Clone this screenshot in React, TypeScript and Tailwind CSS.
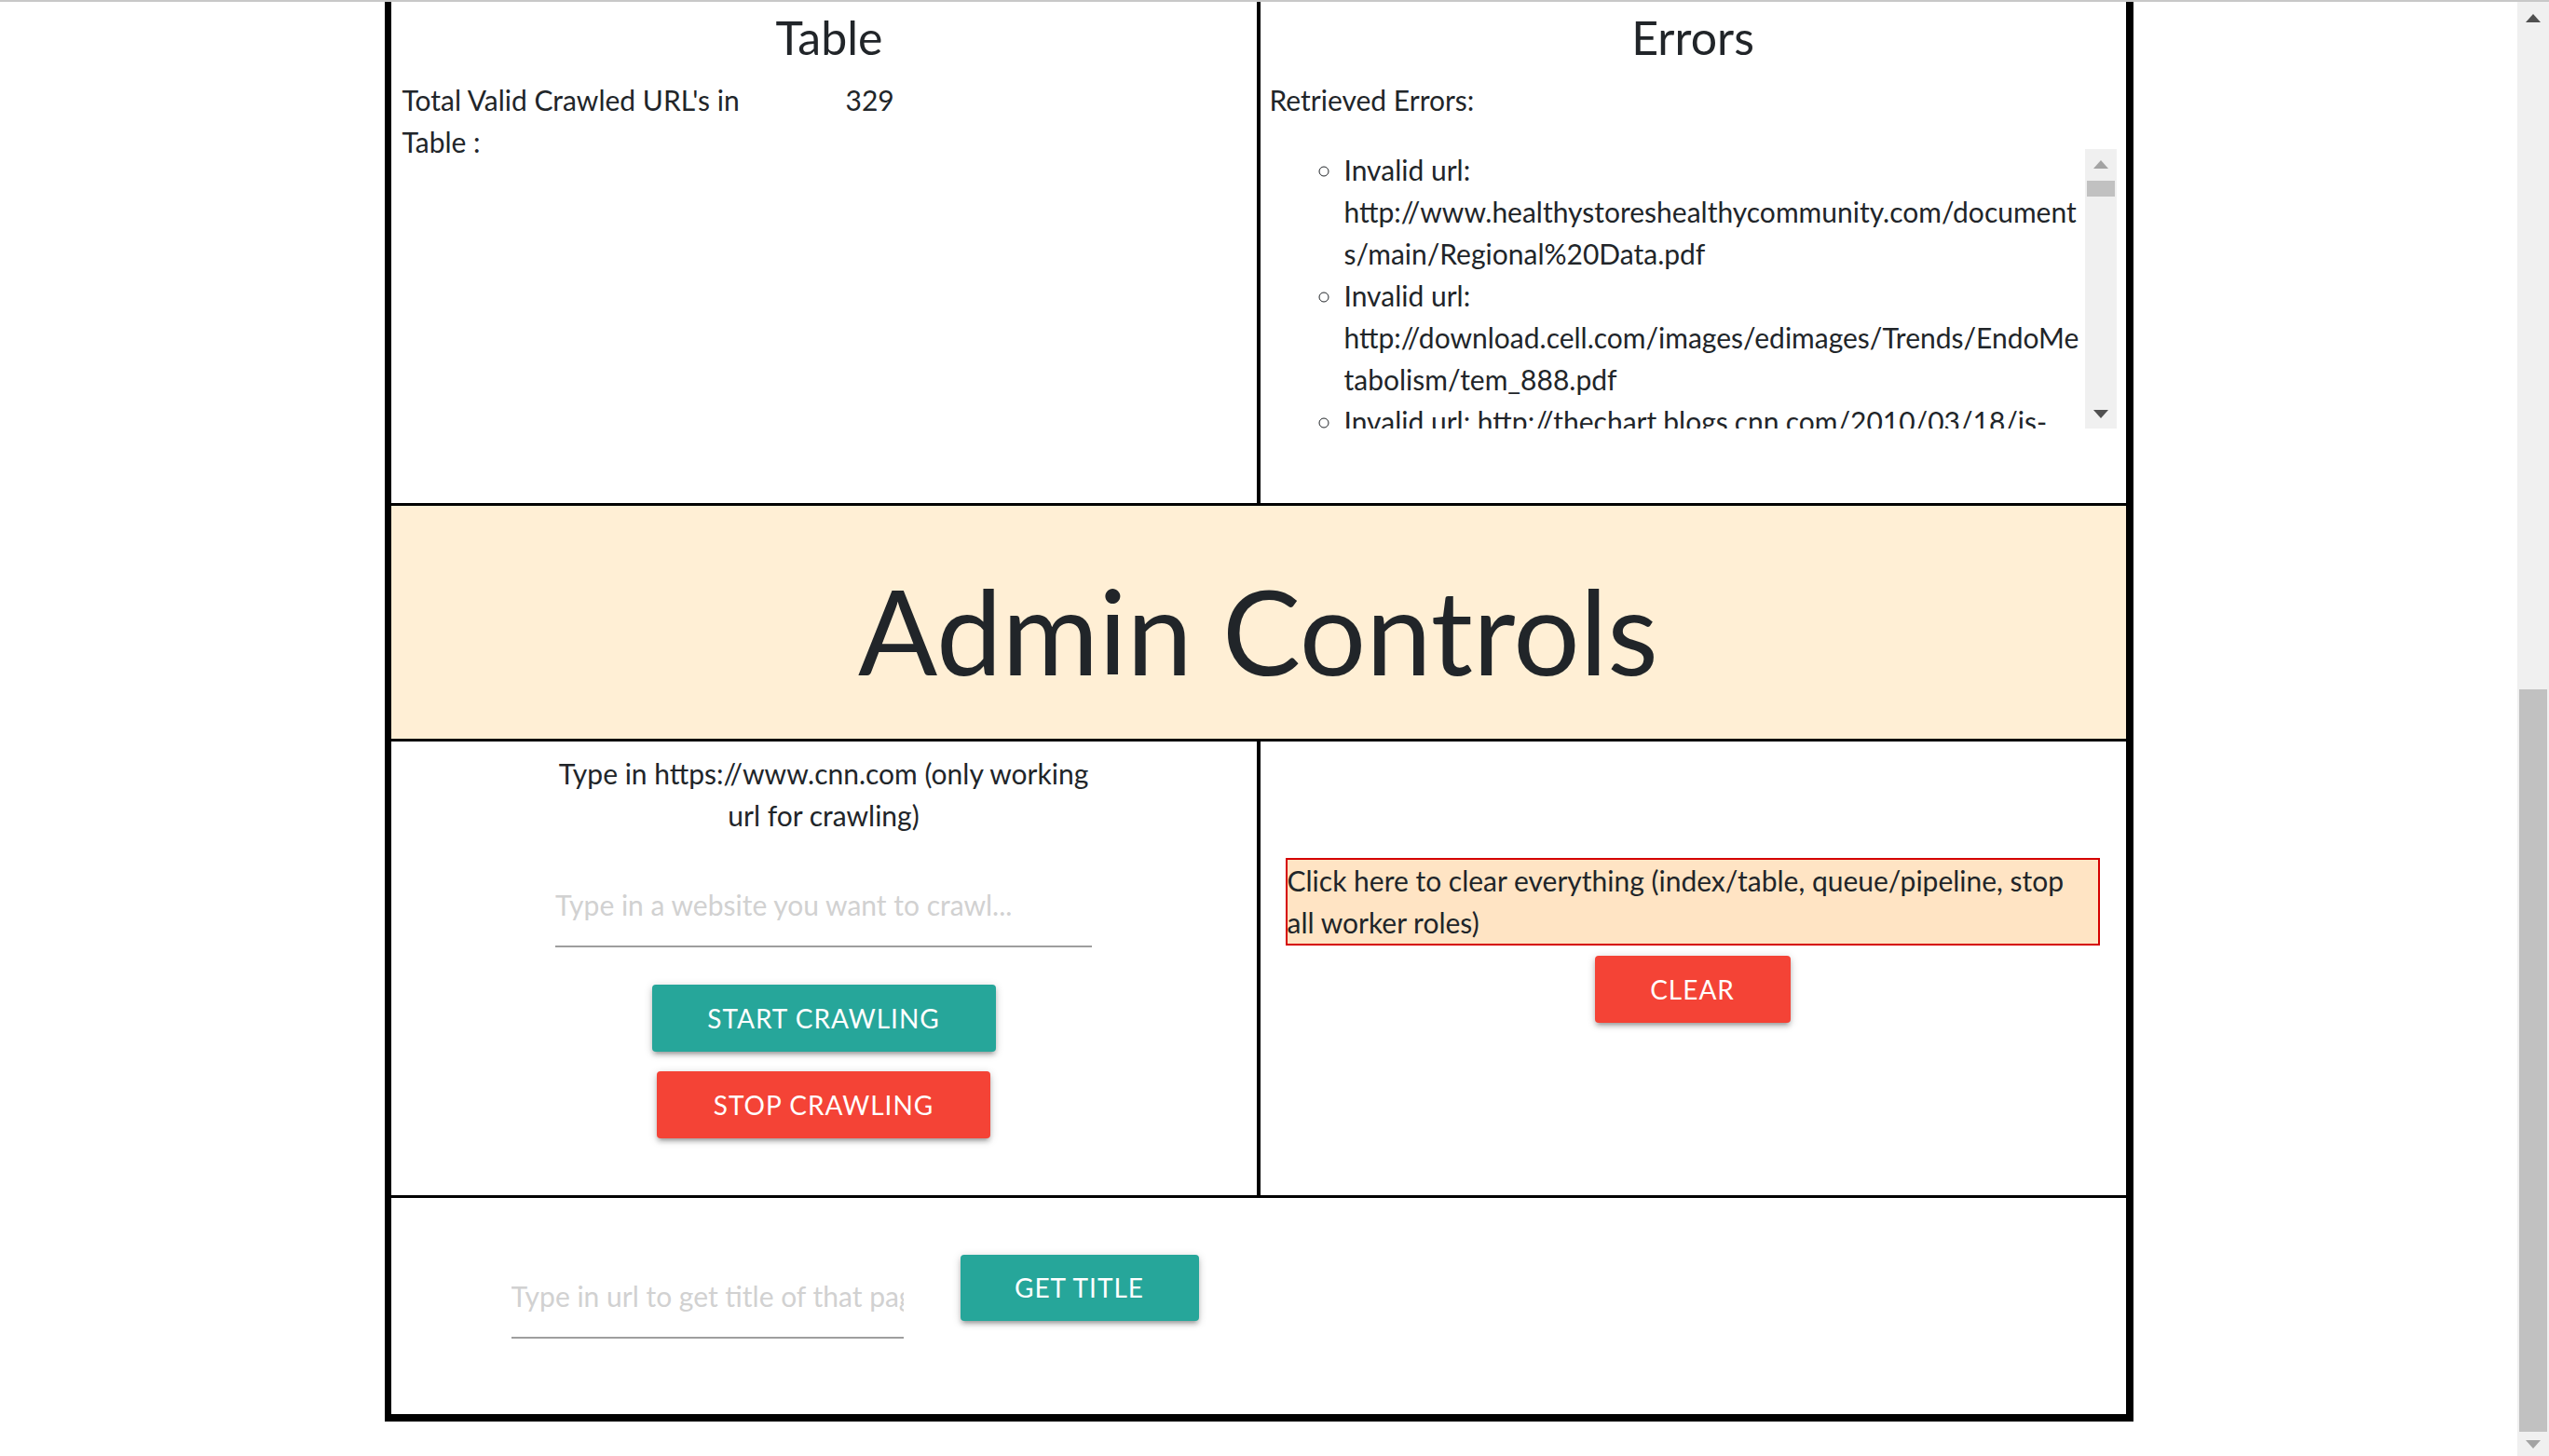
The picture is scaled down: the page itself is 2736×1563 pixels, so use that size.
const ERRORS = [
  'Invalid url: http://www.healthystoreshealthycommunity.com/documents/main/Regional%20Data.pdf',
  'Invalid url: http://download.cell.com/images/edimages/Trends/EndoMetabolism/tem_888.pdf',
  'Invalid url: http://thechart.blogs.cnn.com/2010/03/18/is-your-child-getting-enough-sleep/',
  'Invalid url: http://www.cnn.com/2016/03/04/politics/gop-debate-fact-check/index.html',
  'Invalid url: http://money.cnn.com/video/news/2016/02/10/markets-today.cnnmoney/',
]

function Arrow({ up, color }: { up?: boolean; color: string }) {
  return (
    <svg width="16" height="9" viewBox="0 0 16 9">
      <polygon points={up ? '0,9 8,0 16,9' : '0,0 16,0 8,9'} fill={color} />
    </svg>
  )
}

const buttonShadow =
  'shadow-[0_4px_4px_0_rgba(0,0,0,0.14),0_6px_2px_-4px_rgba(0,0,0,0.12),0_2px_10px_0_rgba(0,0,0,0.2)]'

export default function App() {
  return (
    <div className="flex h-[1563px] w-full overflow-hidden border-t-2 border-[#c8c8c8] bg-white font-['Lato',sans-serif] text-[30px] leading-[45px] text-[#212529]">
      <main className="min-w-0 flex-1 overflow-hidden">
        <div className="mx-auto w-[1877px] border-l-[7px] border-r-[8px] border-b-[8px] border-black">
          {/* Table / Errors */}
          <div className="flex h-[538px]">
            <section className="w-[933px] shrink-0 border-r-4 border-black pl-3">
              <h2 className="pt-[8px] text-center text-[50px] leading-[60px]">Table</h2>
              <div className="mt-[15px] flex">
                <div className="w-[476px] pr-[56px]">Total Valid Crawled URL's in Table :</div>
                <div>329</div>
              </div>
            </section>

            <section className="min-w-0 flex-1 px-[10px]">
              <h2 className="pt-[8px] text-center text-[50px] leading-[60px]">Errors</h2>
              <p className="mt-[15px]">Retrieved Errors:</p>
              <div className="mt-[30px] flex h-[300px]">
                <div className="min-w-0 flex-1 overflow-hidden">
                  <ul className="list-[circle] pl-[80px] [overflow-wrap:anywhere]">
                    {ERRORS.map(e => (
                      <li key={e}>{e}</li>
                    ))}
                  </ul>
                </div>
                <div className="flex w-[34px] shrink-0 flex-col bg-[#f0f0f0]">
                  <div className="flex h-[32px] items-center justify-center">
                    <Arrow up color="#a3a3a3" />
                  </div>
                  <div className="mx-[2px] mt-[2px] h-[17px] bg-[#c1c1c1]" />
                  <div className="flex-1" />
                  <div className="flex h-[32px] items-center justify-center">
                    <Arrow color="#505050" />
                  </div>
                </div>
              </div>
            </section>
          </div>

          {/* Header */}
          <div className="h-[256px] border-y-[3px] border-black bg-[#ffefd5]">
            <h1 className="pt-[59px] text-center text-[126px] leading-[150px]">Admin Controls</h1>
          </div>

          {/* Crawl controls / Clear */}
          <div className="flex h-[490px] border-b-[3px] border-black">
            <section className="w-[933px] shrink-0 border-r-4 border-black">
              <div className="mx-auto flex w-[576px] flex-col items-center pt-[12px]">
                <p className="text-center">Type in https://www.cnn.com (only working url for crawling)</p>
                <input
                  className="mt-[29px] h-[90px] w-full border-b-2 border-[#9e9e9e] bg-transparent text-[30px] outline-none placeholder:text-[#d1d1d1]"
                  placeholder="Type in a website you want to crawl..."
                />
                <button className={`mt-[40px] h-[72px] w-[369px] rounded-[4px] bg-[#26a69a] text-[28px] tracking-[1px] text-white uppercase ${buttonShadow}`}>
                  Start Crawling
                </button>
                <button className={`mt-[21px] h-[72px] w-[358px] rounded-[4px] bg-[#f44336] text-[28px] tracking-[1px] text-white uppercase ${buttonShadow}`}>
                  Stop Crawling
                </button>
              </div>
            </section>

            <section className="flex min-w-0 flex-1 flex-col pl-[27px] pr-[28px] pt-[125px]">
              <div className="border-2 border-[#d50000] bg-[#ffe4c4]">
                Click here to clear everything (index/table, queue/pipeline, stop all worker roles)
              </div>
              <button className={`mx-auto mt-[11px] h-[72px] w-[210px] rounded-[4px] bg-[#f44336] text-[28px] tracking-[1px] text-white uppercase ${buttonShadow}`}>
                Clear
              </button>
            </section>
          </div>

          {/* Get title */}
          <div className="flex h-[232px] items-start pl-[129px] pt-[61px]">
            <input
              className="h-[90px] w-[421px] border-b-2 border-[#9e9e9e] bg-transparent text-[30px] outline-none placeholder:text-[#d1d1d1]"
              placeholder="Type in url to get title of that page..."
            />
            <button className={`ml-[61px] h-[71px] w-[256px] rounded-[4px] bg-[#26a69a] text-[28px] tracking-[1px] text-white uppercase ${buttonShadow}`}>
              Get Title
            </button>
          </div>
        </div>
      </main>

      {/* page scrollbar */}
      <div className="flex w-[34px] shrink-0 flex-col bg-[#f0f0f0]">
        <div className="flex h-[34px] items-center justify-center">
          <Arrow up color="#505050" />
        </div>
        <div className="flex-1" />
        <div className="mx-[2px] h-[797px] bg-[#c1c1c1]" />
        <div className="flex h-[26px] items-center justify-center">
          <Arrow color="#a3a3a3" />
        </div>
      </div>
    </div>
  )
}
